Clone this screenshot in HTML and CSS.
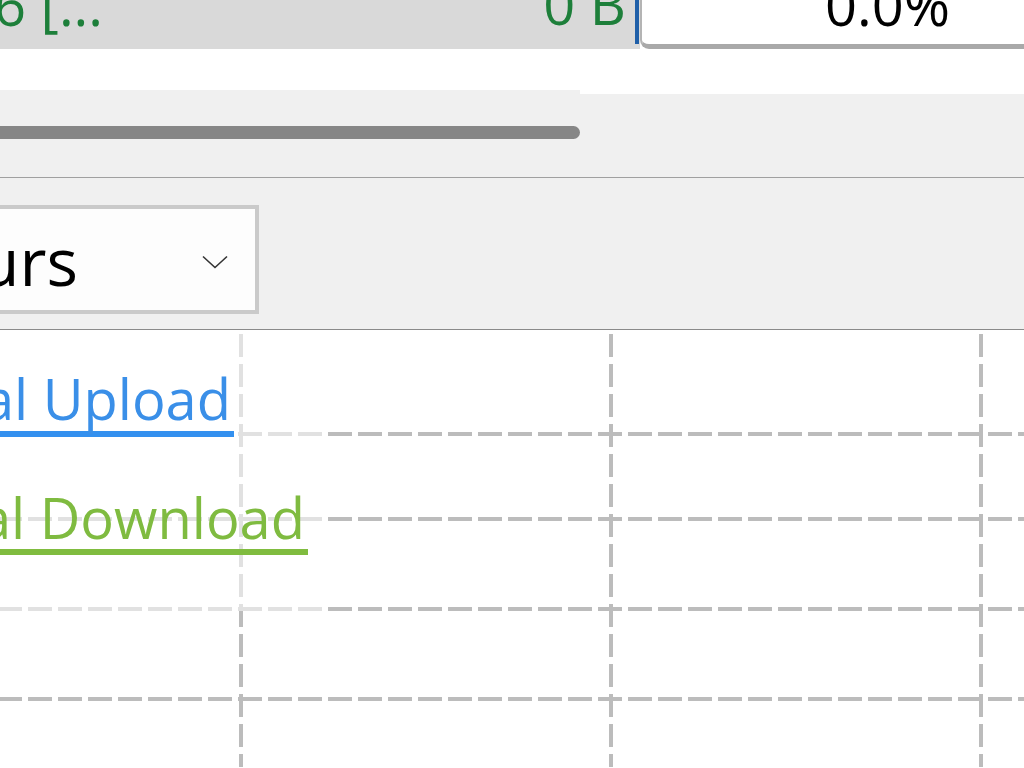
FILE: index.html
```html
<!DOCTYPE html>
<html lang="en">
<head>
<meta charset="utf-8">
<title>Network usage</title>
<link rel="stylesheet" href="styles.css">
</head>
<body>
  <div class="topbar">
    <div class="cell">
      <span class="name">6 [...</span>
      <span class="size">0 B</span>
      <span class="accent"></span>
    </div>
    <div class="pct"><span>0.0%</span></div>
  </div>

  <div class="scroll-area">
    <div class="track"><div class="thumb"></div></div>
    <div class="track-rest"></div>
  </div>

  <div class="toolbar">
    <div class="dropdown">
      <div class="dd-text"><span>24 Hours</span></div>
      <svg class="chev" width="26" height="14" viewBox="0 0 26 14" aria-hidden="true">
        <path d="M1 1.5 L13 12.5 L25 1.5" fill="none" stroke="#333" stroke-width="1.6"/>
      </svg>
    </div>
  </div>

  <div class="chart">
    <div class="hline h1"></div>
    <div class="hline h2"></div>
    <div class="hline h3"></div>
    <div class="hline h4"></div>
    <div class="vline v1"></div>
    <div class="vline v2"></div>
    <div class="vline v3"></div>
    <div class="legend">
      <div class="item up"><span>Total Upload</span></div>
      <div class="item down"><span>Total Download</span></div>
    </div>
  </div>
</body>
</html>
```
FILE: styles.css
```css
html, body {
  margin: 0;
  padding: 0;
}
body {
  width: 1024px;
  height: 768px;
  overflow: hidden;
  background: #fff;
  font-family: "Open Sans", "Noto Sans", sans-serif;
}

/* top row */
.topbar {
  display: flex;
  height: 49px;
  overflow: hidden;
}
.cell {
  width: 640px;
  flex: none;
  background: #d9d9d9;
  display: flex;
  align-items: flex-start;
  color: #1d7f3a;
  font-size: 56px;
  line-height: 56px;
  overflow: hidden;
}
.name {
  flex: 1;
  margin-left: -6px;
  margin-top: -24px;
  white-space: nowrap;
}
.size {
  margin-top: -25px;
  margin-right: 9px;
  white-space: nowrap;
}
.accent {
  width: 4px;
  height: 44px;
  background: #1f5fa8;
  margin-right: 1px;
  flex: none;
}
.pct {
  flex: 1;
  box-sizing: border-box;
  height: 49px;
  background: #fff;
  border-left: 2px solid #b4b4b4;
  border-bottom: 5px solid #a9a9a9;
  border-bottom-left-radius: 9px;
  padding-left: 183px;
  font-size: 56px;
  line-height: 56px;
  color: #000;
  overflow: hidden;
}
.pct span {
  display: block;
  margin-top: -24px;
  white-space: nowrap;
}

/* scroll area */
.scroll-area {
  display: flex;
  height: 128px;
  background: #fff;
  border-bottom: 1px solid #a0a0a0;
}
.track {
  width: 580px;
  flex: none;
  margin-top: 41px;
  padding-top: 36px;
  background: #f0f0f0;
  box-sizing: border-box;
}
.thumb {
  height: 13px;
  background: #868686;
  border-radius: 0 7px 7px 0;
}
.track-rest {
  flex: 1;
  margin-top: 45px;
  background: #f0f0f0;
}

/* toolbar */
.toolbar {
  height: 152px;
  box-sizing: border-box;
  padding-top: 27px;
  background: #f0f0f0;
  border-bottom: 1px solid #8a8a8a;
}
.dropdown {
  width: 259px;
  height: 109px;
  box-sizing: border-box;
  border: 4px solid #cacaca;
  border-left: 0;
  background: #fdfdfd;
  display: flex;
  align-items: center;
}
.dd-text {
  width: 78px;
  flex: none;
  display: flex;
  justify-content: flex-end;
  font-size: 66px;
  line-height: 66px;
  white-space: nowrap;
  color: #000;
}
.chev {
  margin-left: 124px;
  margin-top: 4px;
  flex: none;
}

/* chart */
.chart {
  position: relative;
  height: 437px;
  background: #fff;
  overflow: hidden;
}
.hline {
  position: absolute;
  left: 0;
  right: 0;
  height: 4px;
  background-image: repeating-linear-gradient(to right, #bcbcbc 0 24px, transparent 24px 30px);
  background-position: -2px 0;
}
.h1 { top: 102px; }
.h2 { top: 187px; }
.h3 { top: 277px; }
.h4 { top: 367px; }
.vline {
  position: absolute;
  top: 4px;
  bottom: 0;
  width: 4px;
  background-image: repeating-linear-gradient(to bottom, #bcbcbc 0 23px, transparent 23px 30px);
}
.v1 { left: 239px; }
.v2 { left: 609px; }
.v3 { left: 979px; }

.legend {
  position: absolute;
  left: 0;
  top: 0;
  width: 323px;
  height: 281px;
  box-sizing: border-box;
  padding-top: 40px;
  background: rgba(255, 255, 255, 0.55);
}
.item {
  box-sizing: border-box;
  display: flex;
  justify-content: flex-end;
  white-space: nowrap;
  font-size: 56px;
  line-height: 56px;
  padding-right: 3px;
  padding-bottom: 5px;
  border-bottom: 6px solid;
}
.up {
  width: 234px;
  color: #3a8fe8;
  border-color: #3390ef;
}
.down {
  width: 308px;
  margin-top: 52px;
  padding-bottom: 4px;
  color: #7fbb40;
  border-color: #80bc3f;
}
```
